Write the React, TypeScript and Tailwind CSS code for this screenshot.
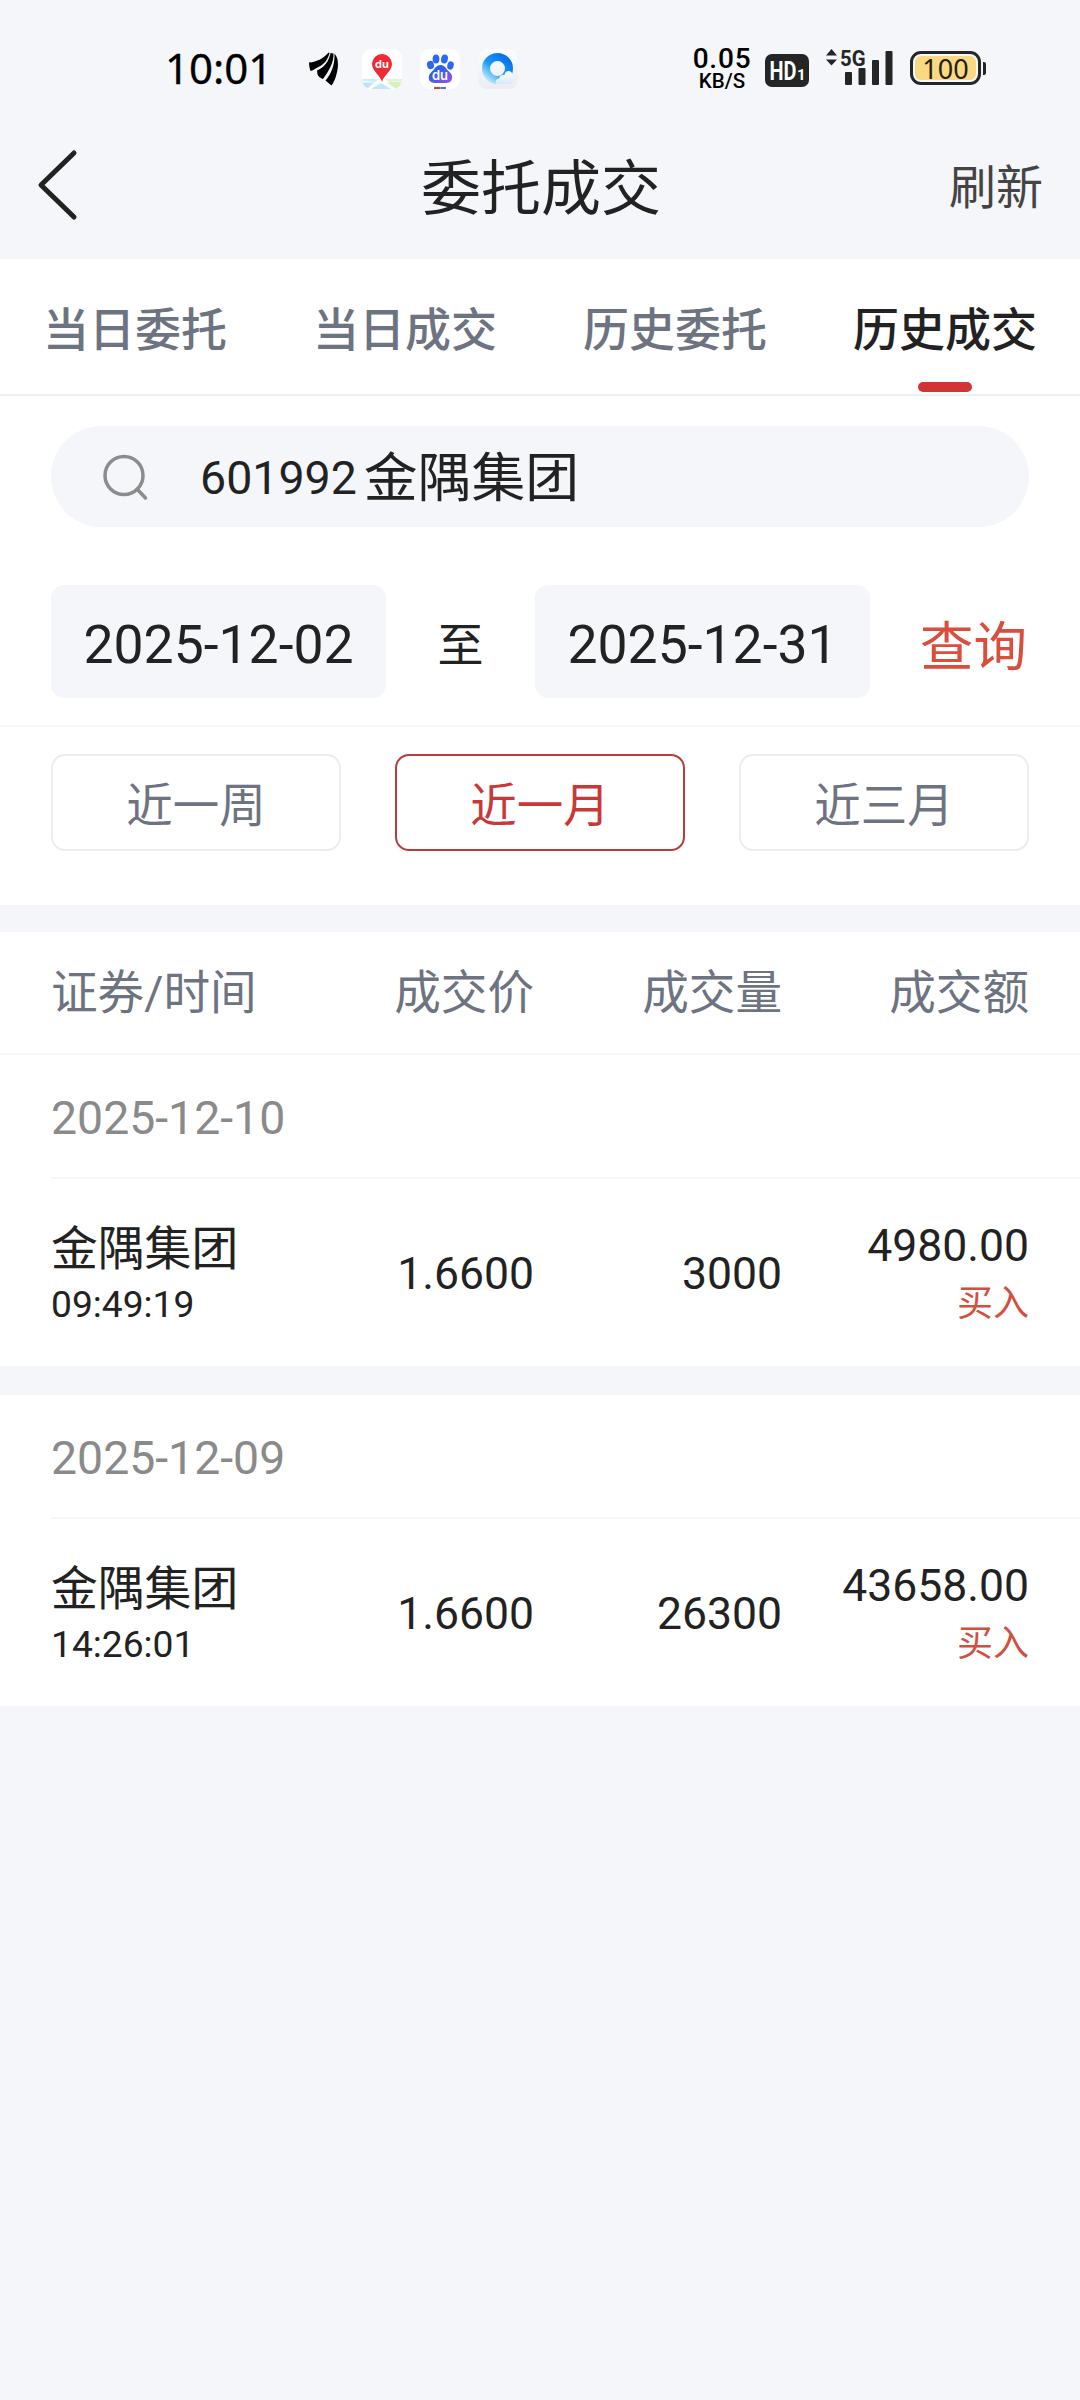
import React, { useState } from 'react';
import clsx from 'clsx';

interface Deal {
  name: string;
  time: string;
  price: string;
  volume: string;
  amount: string;
  side: string;
}

interface DealGroup {
  date: string;
  deals: Deal[];
}

const tabs = ['当日委托', '当日成交', '历史委托', '历史成交'];
const ranges = ['近一周', '近一月', '近三月'];

const groups: DealGroup[] = [
  {
    date: '2025-12-10',
    deals: [{ name: '金隅集团', time: '09:49:19', price: '1.6600', volume: '3000', amount: '4980.00', side: '买入' }],
  },
  {
    date: '2025-12-09',
    deals: [{ name: '金隅集团', time: '14:26:01', price: '1.6600', volume: '26300', amount: '43658.00', side: '买入' }],
  },
];

const WingIcon = () => (
  <svg width="30" height="34" viewBox="0 0 30 34" fill="#000">
    <path d="M0 10.500C8 10 15 6 19.500 0.500L20.500 1C19 8 14 13 9.500 15C6 16.500 4 18.500 1.500 19C0.500 16 0 13 0 10.500Z" />
    <path d="M21.500 1L24.500 1.500C25 11 19 20 14 27C11.500 26.500 9.500 24.500 8.500 22.500L8 18.500C15 16 20 9 21.500 1Z" />
    <path d="M25.500 1.500C28.500 5 29 9 29 13C28.500 21 26 29 22.500 33.500L16.500 28.500C22 22 26 13 25.500 1.500Z" />
  </svg>
);

const MapIcon = () => (
  <svg width="40" height="40" viewBox="0 0 40 40">
    <defs>
      <clipPath id="mapClip"><rect width="40" height="40" rx="9" /></clipPath>
    </defs>
    <g clipPath="url(#mapClip)">
      <rect width="40" height="40" fill="#fff" />
      <path d="M0 30H17L13 33L0 32Z" fill="#cfeefa" />
      <path d="M0 33.500L12 33.500L5 40H0Z" fill="#b9e6fa" />
      <path d="M19 34L29 40H9Z" fill="#bfe8f8" />
      <path d="M23 30H40V32L27 33Z" fill="#dcf5cf" />
      <path d="M25 33.500L40 32.500V40H34Z" fill="#d2f2be" />
      <path d="M20 33C19 27 10 22 10 15A10 10 0 0 1 30 15C30 22 21 27 20 33Z" fill="#ee2a34" />
    </g>
    <text x="20" y="19" textAnchor="middle" fontSize="11" fontWeight="700" fill="#fff" fontFamily="Inter, sans-serif">du</text>
  </svg>
);

const PawIcon = () => (
  <svg width="40" height="40" viewBox="0 0 40 40">
    <defs>
      <linearGradient id="paw" x1="0" y1="0" x2="1" y2="1">
        <stop offset="0.3" stopColor="#2862ec" />
        <stop offset="1" stopColor="#a34bf0" />
      </linearGradient>
    </defs>
    <rect width="40" height="40" rx="9" fill="#fff" />
    <ellipse cx="10.500" cy="16" rx="3.500" ry="4.200" fill="#2b6af0" transform="rotate(-12 10.500 16)" />
    <ellipse cx="16" cy="10" rx="3.400" ry="4.500" fill="#2b6af0" />
    <ellipse cx="24.500" cy="10" rx="3.400" ry="4.500" fill="#2b6af0" transform="rotate(10 24.500 10)" />
    <ellipse cx="30.500" cy="16.500" rx="3.200" ry="4.200" fill="#2b6af0" transform="rotate(14 30.500 16.500)" />
    <path d="M20.500 16C25 16 26 20 29 22.500C32 25 33 28 31.500 31C30 34.500 26 34 20.500 34C15 34 11 34.500 9.200 31C8 28 9 25 12 22.500C15 20 16 16 20.500 16Z" fill="url(#paw)" />
    <rect x="14" y="38" width="6.500" height="2" fill="#c9433f" />
    <rect x="20.500" y="38" width="5.500" height="2" fill="#4a7fd0" />
    <text x="20" y="31" textAnchor="middle" fontSize="13" fontWeight="600" fill="#fff" fontFamily="Inter, sans-serif">du</text>
  </svg>
);

const BrowserIcon = () => (
  <svg width="40" height="40" viewBox="0 0 40 40">
    <defs>
      <linearGradient id="ring" x1="0.9" y1="0" x2="0.1" y2="1">
        <stop offset="0" stopColor="#0a6fe8" />
        <stop offset="0.55" stopColor="#1a9af6" />
        <stop offset="1" stopColor="#b4e6fd" />
      </linearGradient>
      <linearGradient id="tile" x1="0" y1="0" x2="0" y2="1">
        <stop offset="0" stopColor="#fbfcfd" />
        <stop offset="1" stopColor="#e9edf2" />
      </linearGradient>
      <linearGradient id="cloud" x1="0" y1="0" x2="0" y2="1">
        <stop offset="0" stopColor="#ffffff" />
        <stop offset="1" stopColor="#dbe8f5" />
      </linearGradient>
    </defs>
    <rect width="40" height="40" rx="9" fill="url(#tile)" />
    <circle cx="19.500" cy="19.500" r="11.500" fill="none" stroke="url(#ring)" strokeWidth="8" />
    <path d="M20 35C16.500 35 16.500 30 21 29.500C22 26 25 25.500 26.500 26C27 20.500 34.500 21 34.500 26.500C37 28 36 35 31 35Z" fill="url(#cloud)" />
  </svg>
);

const HdIcon = () => (
  <svg width="44" height="33" viewBox="0 0 44 33" fontFamily="Roboto, sans-serif" fontWeight="700" fill="#fff">
    <rect width="44" height="33" rx="7" fill="#232624" />
    <text x="4.500" y="25.500" fontSize="25" textLength="27" lengthAdjust="spacingAndGlyphs">HD</text>
    <text x="32" y="25.500" fontSize="15">1</text>
  </svg>
);

const SignalIcon = () => (
  <svg width="68" height="46" viewBox="0 -8 68 46" fill="#232624">
    <path d="M6.500 1L12 7.500H1Z" />
    <path d="M1 11.500H12L6.500 17.500Z" />
    <text x="15" y="17.500" fontSize="22.500" fontWeight="700" textLength="25.500" lengthAdjust="spacingAndGlyphs" fontFamily="Roboto, sans-serif">5G</text>
    <rect x="20" y="24" width="7" height="13" rx="1" />
    <rect x="33.500" y="20" width="7" height="17" rx="1" />
    <rect x="47" y="12" width="7" height="25" rx="1" />
    <rect x="60.500" y="3" width="7" height="34" rx="1" />
  </svg>
);

const StatusBar = () => (
  <div className="flex h-[138px] shrink-0 items-start justify-between pl-[165px] pr-[94px] pt-[40px] font-['Noto_Sans',sans-serif]">
    <div className="flex items-start pt-[8px]">
      <span className="-mt-px w-[144px] text-[42px] leading-[42px] text-black [-webkit-text-stroke:0.3px_black]">10:01</span>
      <span className="mt-[4px]">
        <WingIcon />
      </span>
      <div className="ml-[23px] mt-px flex gap-[18px]">
        <MapIcon />
        <PawIcon />
        <BrowserIcon />
      </div>
    </div>
    <div className="flex items-start">
      <div className="flex w-[60px] flex-col items-center pt-[6px] font-['Roboto',sans-serif] font-medium text-black">
        <span className="text-[28px] leading-[26px] tracking-[0.8px]">0.05</span>
        <span className="text-[20.500px] leading-[18px]">KB/S</span>
      </div>
      <div className="ml-[13px] mt-[14px]">
        <HdIcon />
      </div>
      <div className="ml-[16px]">
        <SignalIcon />
      </div>
      <div className="ml-[17px] mt-[11px] flex items-center">
        <div className="flex h-[34px] w-[71px] rounded-[11px] border-[3px] border-[#232624] p-[2px]">
          <div className="flex flex-1 items-center justify-center rounded-[6px] bg-[#fad983] text-[27px] leading-none text-[#232010]">100</div>
        </div>
        <div className="ml-[2px] h-[13px] w-[3px] rounded-r-[2px] bg-[#232624]" />
      </div>
    </div>
  </div>
);

const NavBar = () => (
  <div className="flex h-[121px] shrink-0 items-start justify-between px-[37px] text-[#222]">
    <svg className="mt-[11px]" width="96" height="72" viewBox="0 0 96 72" fill="none" stroke="#222" strokeWidth="5" strokeLinecap="round" strokeLinejoin="round">
      <path d="M37 4L4 36L37 68" />
    </svg>
    <h1 className="mt-[22px] text-[60px] leading-[60px]">委托成交</h1>
    <button className="mt-[26px] text-[47px] leading-[47px] text-[#444]">刷新</button>
  </div>
);

const DealRow: React.FC<{ deal: Deal }> = ({ deal }) => (
  <div className="flex h-[187px] items-center px-[51px] pt-[2px] text-[44.500px] leading-[48px] text-[#222]">
    <div className="flex w-[236px] flex-col pt-[6px]">
      <span className="text-[46.800px] leading-[54px]">{deal.name}</span>
      <span className="text-[37.200px] leading-[56px]">{deal.time}</span>
    </div>
    <span className="w-[247px] text-right">{deal.price}</span>
    <span className="w-[248px] text-right">{deal.volume}</span>
    <div className="flex flex-1 flex-col items-end pt-[2px]">
      <span className="leading-[54px]">{deal.amount}</span>
      <span className="pt-[4px] text-[36px] leading-[54px] text-[#d14f3f]">{deal.side}</span>
    </div>
  </div>
);

const App: React.FC = () => {
  const [tab, setTab] = useState(3);
  const [range, setRange] = useState(1);

  return (
    <div className="flex min-h-[2400px] w-[1080px] flex-col bg-[#f4f6fa] font-['Roboto','Noto_Sans_CJK_SC',sans-serif] text-[#222]">
      <StatusBar />
      <NavBar />

      <div className="flex h-[137px] border-b-2 border-[#eff0f3] bg-white">
        {tabs.map((label, i) => (
          <button
            key={label}
            onClick={() => setTab(i)}
            className={clsx('flex flex-1 flex-col items-center justify-between pb-[2px] pt-[47px] font-medium', i === tab ? 'text-[#222]' : 'text-[#6d7380]')}
          >
            <span className="text-[46px] leading-[48px]">{label}</span>
            {i === tab && <span className="h-[10px] w-[54px] rounded-full bg-[#d23436]" />}
          </button>
        ))}
      </div>

      <div className="bg-white px-[51px] pt-[30px]">
        <div className="flex h-[101px] items-center rounded-full bg-[#f4f6fa]">
          <svg className="ml-[50px]" width="48" height="48" viewBox="0 0 48 48" fill="none" stroke="#8c8c8c" strokeWidth="3.500" strokeLinecap="round">
            <circle cx="23" cy="22.500" r="19" />
            <path d="M36 36L44.500 45" />
          </svg>
          <span className="ml-[51px] pt-[3px] text-[46.500px] leading-[56px]">601992</span>
          <span className="ml-[7px] pt-[4px] text-[53.800px] leading-[56px]">金隅集团</span>
        </div>
        <div className="mt-[58px] flex h-[113px] items-center">
          <div className="flex h-full w-[335px] items-center justify-center rounded-[13px] bg-[#f4f6fa] pt-[7px] text-[53.500px]">2025-12-02</div>
          <span className="w-[149px] pt-[8px] text-center text-[46px]">至</span>
          <div className="flex h-full w-[335px] items-center justify-center rounded-[13px] bg-[#f4f6fa] pt-[7px] text-[53.500px]">2025-12-31</div>
          <button className="ml-[50px] pt-[13px] text-[53.500px] text-[#d94e3d]">查询</button>
        </div>
      </div>

      <div className="bg-white pt-[27px]">
        <div className="flex h-[180px] gap-[54px] border-t-2 border-[#f5f5f6] px-[51px] pt-[27px]">
          {ranges.map((label, i) => (
            <button
              key={label}
              onClick={() => setRange(i)}
              className={clsx(
                'h-[97px] w-[290px] rounded-[14px] border-2 pt-[7px] text-[46.500px] leading-[48px]',
                i === range ? 'border-[#b83c3d] text-[#c93838]' : 'border-[#ecedef] text-[#6d7380]'
              )}
            >
              {label}
            </button>
          ))}
        </div>
      </div>

      <div className="mt-[27px] flex h-[123px] items-center border-b-2 border-[#f5f5f6] bg-white px-[51px] pt-px text-[46.600px] leading-[48px] text-[#6d7380]">
        <span className="w-[236px]">证券/时间</span>
        <span className="w-[247px] text-right">成交价</span>
        <span className="w-[248px] text-right">成交量</span>
        <span className="flex-1 text-right">成交额</span>
      </div>

      <div className="flex flex-col gap-[29px]">
        {groups.map((group) => (
          <section key={group.date} className="bg-white">
            <div className="ml-[51px] flex h-[124px] items-center border-b-2 border-[#f5f5f6] pt-[3px] text-[46.400px] leading-[48px] text-[#8a8a8a]">
              {group.date}
            </div>
            {group.deals.map((deal) => (
              <DealRow key={deal.time} deal={deal} />
            ))}
          </section>
        ))}
      </div>
    </div>
  );
};

export default App;
